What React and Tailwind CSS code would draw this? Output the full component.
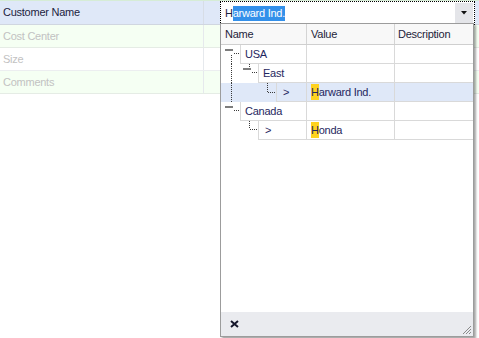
import React from "react";

const dot = { stroke: "#3a3a3a", strokeWidth: 1, strokeDasharray: "1 1" };

const Minus = ({ x }) => <rect x={x} y={4} width={8} height={2} fill="#7d7d7d" />;

const TreeRow = ({ indent, lines, name, value, leaf, hl }) => (
  <div className={`flex h-[19px] ${hl ? "bg-[#dfe8f8]" : ""}`}>
    <div className="flex w-[86px] border-r border-[#d9d9d9]">
      <svg width={indent} height={19} className="shrink-0">
        {lines}
      </svg>
      <div
        className={`flex-1 flex items-center border-l border-b border-[#d9d9d9] ${
          leaf ? "pl-[6px]" : "pl-[4px]"
        }`}
      >
        {name}
      </div>
    </div>
    <div className="w-[88px] flex items-center pl-[4px] border-r border-b border-[#d9d9d9]">
      {value && (
        <>
          <span className="bg-[#ffd21f]">{value[0]}</span>
          {value.slice(1)}
        </>
      )}
    </div>
    <div className="flex-1 border-b border-[#d9d9d9]" />
  </div>
);

const GridRow = ({ label, first, green, last }) => (
  <div
    className={`flex h-[23px] border-b ${
      green ? "bg-[#f5fff3] border-[#e5ece5]" : "bg-white border-[#eceef0]"
    }`}
  >
    <div className="w-[204px] flex items-center pl-[3px] border-r border-[#e6e9ed] text-[#c2c2c2]">
      {label}
    </div>
    <div className="flex-1" />
  </div>
);

export default function App() {
  return (
    <div className="relative w-[479px] h-[338px] bg-white overflow-hidden font-['Liberation_Sans',Arial,sans-serif] text-[11px] tracking-[-0.25px]">
      {/* property grid */}
      <div className="h-px bg-[#d6ecd6]" />
      <div className="flex h-[24px] bg-[#dfe8f8] border-b border-[#d0d6e0]">
        <div className="w-[204px] flex items-center pl-[3px] border-r border-[#d7dde6] text-[#1c2340]">
          Customer Name
        </div>
        <div className="flex-1" />
      </div>
      <GridRow label="Cost Center" green />
      <GridRow label="Size" />
      <GridRow label="Comments" green />

      {/* in-place editor */}
      <div className="absolute left-[220px] top-[1px] w-[255px] h-[24px] border border-dotted border-black bg-white flex items-center">
        <div className="flex-1 pl-[4px] text-[#1c2340] flex items-center">
          <span>H</span>
          <span className="bg-[#3390ea] text-white leading-[15px]">arward Ind.</span>
        </div>
        <div className="w-[18px] h-[21px] mr-px bg-[#e4e5e9] flex items-center justify-center">
          <svg width="6" height="4">
            <path d="M0 0H6L3 3.5Z" fill="#111" />
          </svg>
        </div>
      </div>

      {/* dropdown popup */}
      <div className="absolute left-[220px] top-[23px] w-[254px] h-[314px] border border-[#9c9c9c] bg-white flex flex-col shadow-[2px_2px_2px_rgba(0,0,0,0.35)] text-[#1f2760]">
        <div className="flex h-[21px] bg-[#f8f8f8] border-b border-[#cfcfcf] text-[#1e1e3a]">
          <div className="w-[86px] flex items-center pl-[4px] border-r border-[#d4d4d4]">Name</div>
          <div className="w-[88px] flex items-center pl-[4px] border-r border-[#d4d4d4]">Value</div>
          <div className="flex-1 flex items-center pl-[3px]">Description</div>
        </div>

        <TreeRow
          indent={19}
          name="USA"
          lines={
            <>
              <Minus x={4} />
              <line x1={13} y1={8.5} x2={19} y2={8.5} {...dot} />
              <line x1={10.5} y1={10} x2={10.5} y2={19} {...dot} />
            </>
          }
        />
        <TreeRow
          indent={37}
          name="East"
          lines={
            <>
              <line x1={10.5} y1={0} x2={10.5} y2={19} {...dot} />
              <line x1={28.5} y1={0} x2={28.5} y2={3} {...dot} />
              <Minus x={22} />
              <line x1={31} y1={8.5} x2={37} y2={8.5} {...dot} />
            </>
          }
        />
        <TreeRow
          indent={55}
          name=">"
          leaf
          hl
          value="Harward Ind."
          lines={
            <>
              <line x1={10.5} y1={0} x2={10.5} y2={19} {...dot} />
              <line x1={46.5} y1={0} x2={46.5} y2={9} {...dot} />
              <line x1={47} y1={9.5} x2={55} y2={9.5} {...dot} />
            </>
          }
        />
        <TreeRow
          indent={19}
          name="Canada"
          lines={
            <>
              <Minus x={4} />
              <line x1={13} y1={8.5} x2={19} y2={8.5} {...dot} />
            </>
          }
        />
        <TreeRow
          indent={37}
          name=">"
          leaf
          value="Honda"
          lines={
            <>
              <line x1={28.5} y1={0} x2={28.5} y2={8} {...dot} />
              <line x1={29} y1={8.5} x2={37} y2={8.5} {...dot} />
            </>
          }
        />

        <div className="mt-auto h-[24px] bg-[#eaebef] flex items-center justify-between pl-[9px] pr-px">
          <svg width="9" height="8">
            <path d="M1 1L8 7M8 1L1 7" stroke="#15152a" strokeWidth="2" />
          </svg>
          <svg width="12" height="12" className="self-end mb-px">
            <path d="M11 3L3 11M11 6L6 11M11 9L9 11" stroke="#8a8a8a" strokeWidth="1" />
          </svg>
        </div>
      </div>
    </div>
  );
}
